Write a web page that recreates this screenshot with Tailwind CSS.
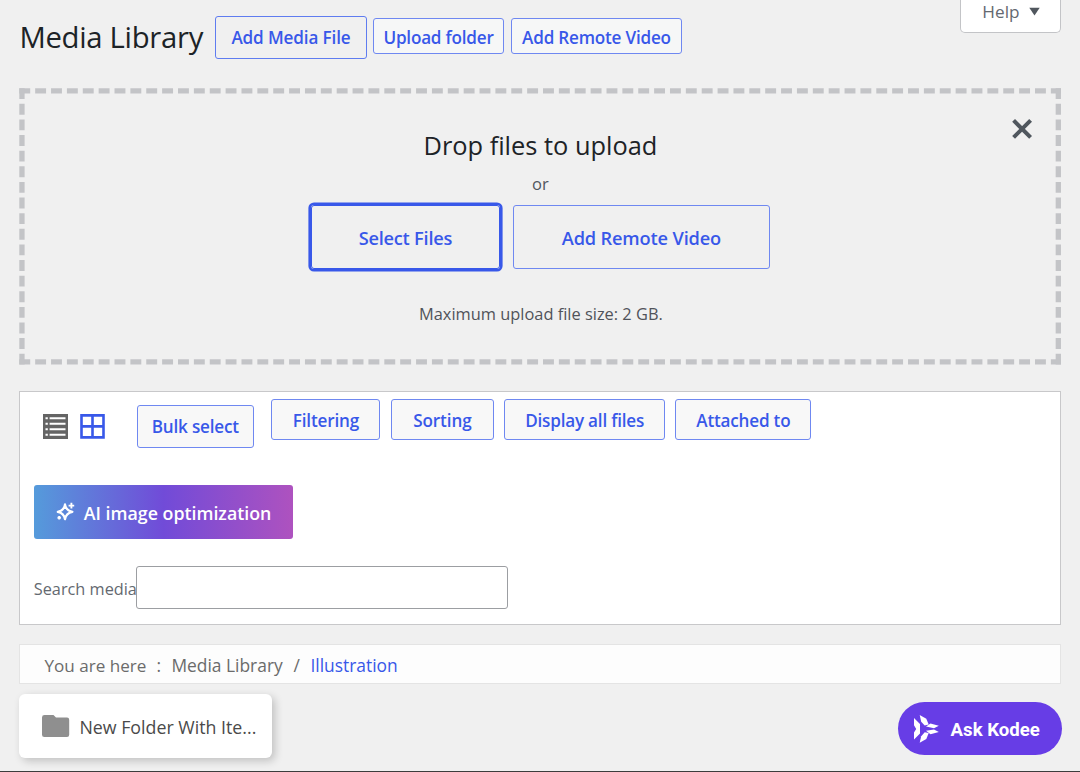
<!DOCTYPE html>
<html lang="en">
<head>
    <meta charset="UTF-8">
    <meta name="viewport" content="width=device-width, initial-scale=1.0">
    <title>Media Library</title>
    <script src="https://cdn.jsdelivr.net/npm/@tailwindcss/browser@4"></script>
</head>
<body class="h-[772px] overflow-hidden bg-[#f0f0f0] font-['Open_Sans','Noto_Sans',sans-serif] text-[17.1px] leading-none text-[#50575e]">

    <div class="relative flex h-[772px] flex-col border-b border-[#3c3c3c] pl-[19.4px] pr-[18.6px]">

        <!-- Page header -->
        <header class="flex h-[88px] items-start">
            <h1 class="mt-[21px] w-[195.6px] whitespace-nowrap text-[29.3px] leading-8 tracking-[-0.3px] text-[#1d2327]">Media Library</h1>
            <button class="mt-4 h-[43px] w-[152px] rounded-[3px] border border-[#5f7cf0] pt-px font-[560] tracking-[-0.12px] text-[#3858e9]">Add Media File</button>
            <button class="ml-[6px] mt-[18px] h-[36px] w-[131px] rounded-[3px] border border-[#6f88f1] bg-[#f6f7f7] pt-[3px] font-[560] tracking-[-0.2px] text-[#3858e9]">Upload folder</button>
            <button class="ml-[7px] mt-[18px] h-[36px] w-[171px] rounded-[3px] border border-[#6f88f1] bg-[#f6f7f7] pt-[3px] font-[560] tracking-[-0.2px] text-[#3858e9]">Add Remote Video</button>
            <button class="ml-auto flex h-[33px] w-[101px] items-start justify-center gap-[9px] rounded-b-[5px] border border-t-0 border-[#c3c4c7] bg-white pt-[2px] text-[17.2px] leading-5 font-medium text-[#646970]">
                Help
                <svg class="mt-[5px] h-[9px] w-[11px]" viewBox="0 0 11 9" fill="#50575e"><path d="M0.3 0.8h10.4L5.5 8.4z"/></svg>
            </button>
        </header>

        <!-- Upload drop zone -->
        <section class="relative flex h-[276.5px] flex-col items-center">
            <svg class="absolute inset-0 h-full w-full" viewBox="0 0 1042 276.5" preserveAspectRatio="none" stroke="#c3c4c7" stroke-width="5.3" fill="none">
                <path stroke-dasharray="10.9 4.97" d="M0.3 2.9H1042M0.3 273.8H1042"/>
                <path stroke-dasharray="10.9 4.72" d="M2.95 0.2V276.5M1039.3 0.2V276.5"/>
            </svg>
            <button class="absolute right-[28.4px] top-[30px]" aria-label="Close">
                <svg class="h-[22px] w-[22px]" viewBox="0 0 22 22" stroke="#50575e" stroke-width="4" fill="none"><path d="M2.6 2.4l17 17M19.6 2.4l-17 17"/></svg>
            </button>
            <h2 class="mt-[41px] text-[25.4px] leading-8 text-[#1d2327]">Drop files to upload</h2>
            <p class="mt-[13px] text-[16.5px] leading-5">or</p>
            <div class="mt-[11px] flex gap-[13px]">
                <button class="h-[64px] w-[189px] rounded-[3px] border border-[#3858e9] pt-[3px] text-[18.2px] font-[560] tracking-[-0.22px] text-[#3858e9] ring-[2.6px] ring-[#3858e9]">Select Files</button>
                <button class="h-[64px] w-[257px] rounded-[3px] border border-[#6f88f1] pt-[3px] text-[18.2px] font-[560] tracking-[-0.15px] text-[#3858e9]">Add Remote Video</button>
            </div>
            <p class="mt-[35px] pl-px text-[16.4px] leading-5 text-[#50535a]">Maximum upload file size: 2 GB.</p>
        </section>

        <!-- Toolbar -->
        <section class="mt-[26.5px] flex h-[234px] flex-col border border-[#c8c8ca] bg-white pl-[13.4px]">
            <div class="flex items-start">
                <svg class="ml-[9px] mt-[22px] h-[25px] w-[25px]" viewBox="0 0 25 25" fill="#646464">
                    <path fill-rule="evenodd" d="M0 0h25v25H0zM2.5 3.2v2h2.3v-2zM6.6 3.2v2h15.9v-2zM2.5 8.7v2h2.3v-2zM6.6 8.7v2h15.9v-2zM2.5 14.2v2h2.3v-2zM6.6 14.2v2h15.9v-2zM2.5 19.8v2h2.3v-2zM6.6 19.8v2h15.9v-2z"/>
                </svg>
                <svg class="ml-[12px] mt-[22px] h-[25px] w-[25px]" viewBox="0 0 25 25" fill="none" stroke="#3858e9" stroke-width="2.6">
                    <path d="M1.5 1.4h22v22h-22zM12.5 1.4v22M1.5 12.4h22"/>
                </svg>
                <button class="ml-[32px] mt-[13px] h-[43px] w-[117px] rounded-[3px] border border-[#6f88f1] bg-[#f8f8f8] pt-px font-[560] tracking-[-0.2px] text-[#3858e9]">Bulk select</button>
                <div class="ml-[17.6px] mt-[7px] flex gap-[10.5px]">
                    <button class="h-[41px] w-[109px] rounded-[3px] border border-[#6f88f1] bg-[#f8f8f8] pt-[2px] font-[560] tracking-[-0.15px] text-[#3858e9]">Filtering</button>
                    <button class="h-[41px] w-[103px] rounded-[3px] border border-[#6f88f1] bg-[#f8f8f8] pt-[2px] font-[560] tracking-[-0.1px] text-[#3858e9]">Sorting</button>
                    <button class="h-[41px] w-[160.5px] rounded-[3px] border border-[#6f88f1] bg-[#f8f8f8] pt-[2px] font-[560] tracking-[-0.2px] text-[#3858e9]">Display all files</button>
                    <button class="h-[41px] w-[136px] rounded-[3px] border border-[#6f88f1] bg-[#f8f8f8] pt-[2px] font-[560] tracking-[-0.2px] text-[#3858e9]">Attached to</button>
                </div>
            </div>
            <button class="mt-[37px] flex h-[54px] w-[259.5px] items-center rounded-[3px] bg-[linear-gradient(90deg,#559bdb,#714bd8_50%,#ae52bf)] pl-[22px] pt-[3px] text-[17.8px] font-semibold text-white">
                <svg class="mb-[4px] mr-[9px] h-[19px] w-[19px]" viewBox="0 0 19 19" fill="none" stroke="#fff" stroke-width="2.2" stroke-linejoin="round">
                    <path d="M9 2.4Q10 8.6 16.4 9.8Q10 11 9 17.2Q8 11 1.8 9.8Q8 8.6 9 2.4z"/>
                    <path d="M15.4 0.8v5.6M12.6 3.6h5.6M3.2 14v3.4M1.5 15.7h3.4" stroke-width="1.9"/>
                </svg>
                AI image optimization
            </button>
            <div class="mt-[27px] flex items-center">
                <label for="search" class="w-[102.6px] whitespace-nowrap pt-[4px] text-[16.3px] text-[#646970]">Search media</label>
                <input id="search" type="text" class="h-[43px] w-[372px] rounded-[3px] border border-[#9c9ea2] bg-white">
            </div>
        </section>

        <!-- Breadcrumb -->
        <nav class="mt-[19px] flex h-[40px] items-center border border-[#e4e4e4] bg-[#fdfdfd] pl-[24px] pt-[3px] text-[17.4px] text-[#6b6b6b]">
            <span class="w-[112px] text-[17.1px]">You are here</span>
            <span class="w-[15px]">:</span>
            <span class="w-[122px]">Media Library</span>
            <span class="w-[17px]">/</span>
            <a class="text-[#3858e9]">Illustration</a>
        </nav>

        <!-- Folder tile -->
        <div class="mt-[10px] flex h-[64px] w-[252.5px] items-center rounded-[6px] bg-white pl-[23px] text-[17.8px] text-[#4a4a4a] shadow-[3px_3px_9px_rgba(0,0,0,0.2)]">
            <svg class="mr-[9px] h-[22px] w-[28px]" viewBox="0 0 28 22" fill="#8f8f8f"><path d="M2.5 0h9L14 2.6h11q2.2 0 2.2 2.2V19.7Q27.2 22 25 22H2.3Q0 22 0 19.7V2.4Q0 0 2.5 0z"/></svg>
            <span class="whitespace-nowrap pt-[3px]">New Folder With Ite...</span>
        </div>

        <!-- Assistant bubble -->
        <button class="absolute bottom-[16px] right-[18.4px] flex h-[53px] w-[164px] items-center rounded-full bg-[#673de6] pl-[16px] font-[Roboto,sans-serif] text-[18.6px] font-bold text-white">
            <svg class="mr-[12px] h-[28px] w-[25px]" viewBox="0 0 25 28" fill="#fff">
                <path d="M0 3l6 6v9.6L0 24.5v-6.9l2.2-3.7L0 10.2z"/>
                <path d="M5.7 0l6.6 3.7 2.4 5.9-4 .9L7.2 6.7z"/>
                <path d="M12 11.6l4.5-3 8.3 2.2-4.800 2.400z"/>
                <path d="M12 15.800l8-1.400 4.800 2.600-8.300 2.200z"/>
                <path d="M10.700 17.200l4 .9-2.400 5.900L5.700 27.800l1.500-6.600z"/>
            </svg>
            <span class="pt-[3px]">Ask Kodee</span>
        </button>
    </div>

</body>
</html>
